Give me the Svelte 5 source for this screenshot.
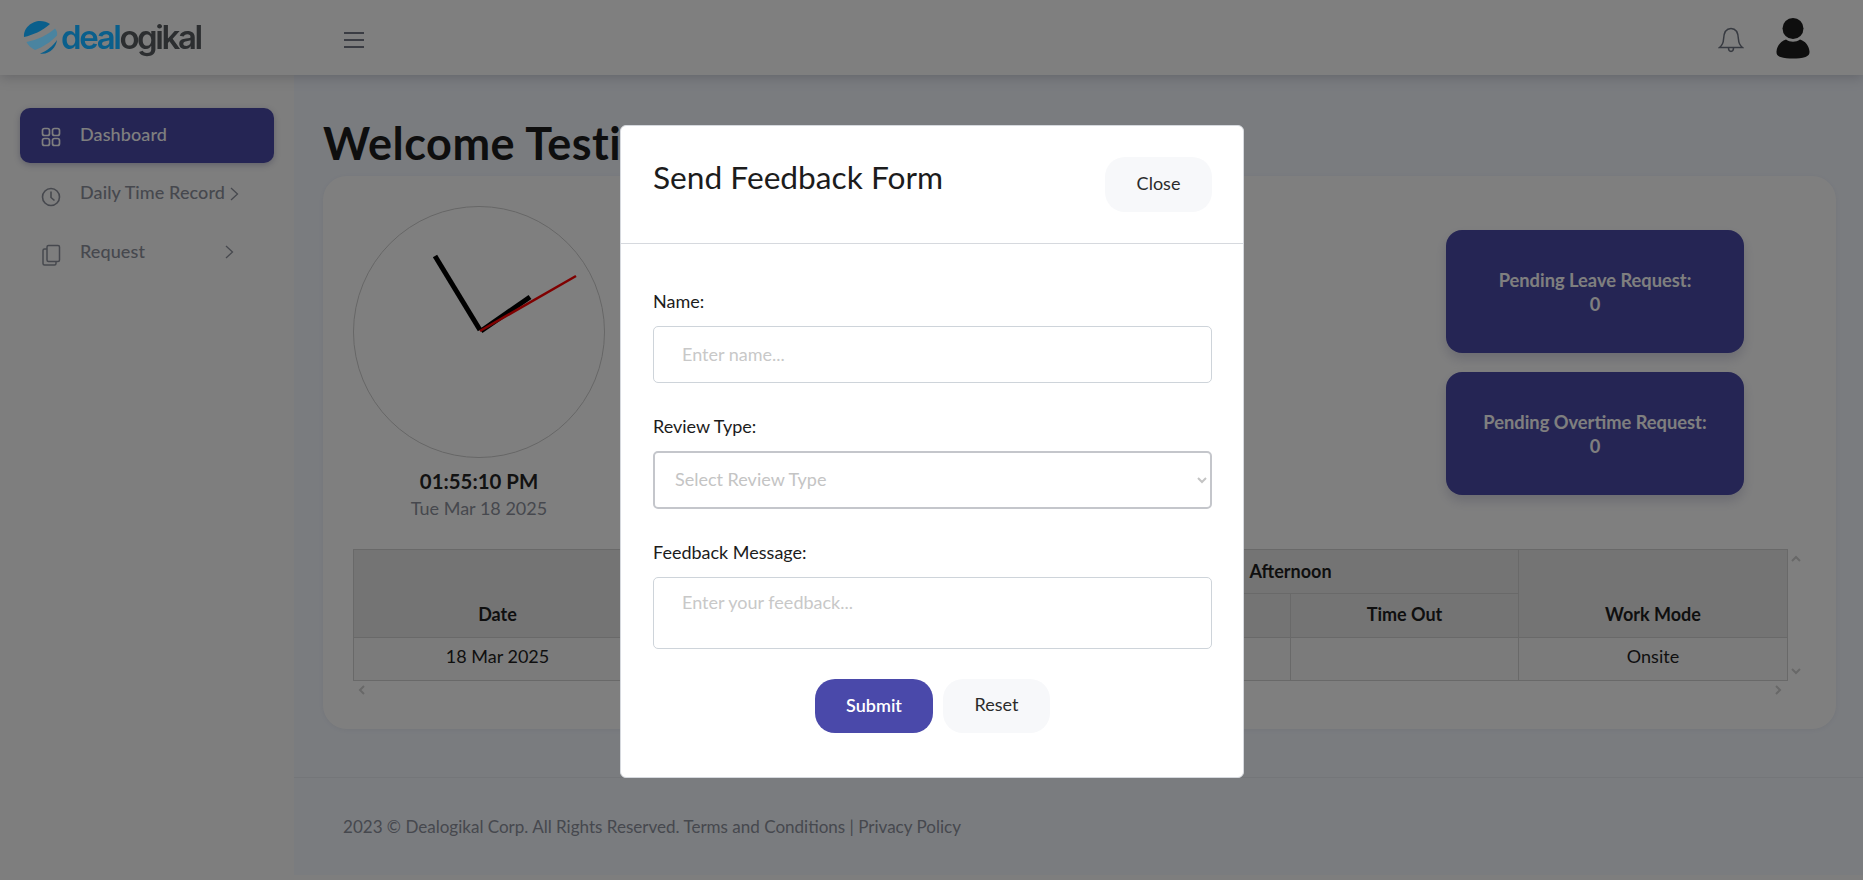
<script>
  const menu = [
    { label: "Dashboard", icon: "grid", active: true },
    { label: "Daily Time Record", icon: "clock", arrow: true, tight: true },
    { label: "Request", icon: "files", arrow: true }
  ];
</script>

<div class="page">
  <header class="topbar">
    <div class="logo">
      <svg width="36" height="36" viewBox="0 0 36 36">
        <path d="M2 17 C1 8 10 1 18 1 C22 1 25 2 28 4 C20 11 11 15 2 17 Z" fill="#0a5f8c"/>
        <path d="M4.500 22 C15 20 26 15 33 8.500 C35 11 35.500 13 35 15.500 C29 22 21 27 13 30 C9 28 6 25 4.500 22 Z" fill="#4a84a0"/>
        <path d="M18 33.500 C25 31 31 26 35 20 C34 28 27 35 18 33.500 Z" fill="#0a5f8c"/>
      </svg>
      <span class="wordmark"><span class="deal">deal</span>ogikal</span>
    </div>
    <button class="burger" aria-label="Menu">
      <svg width="22" height="18" viewBox="0 0 22 18" fill="none" stroke="#747986" stroke-width="2">
        <path d="M1 2h20M1 9h20M1 16h20"/>
      </svg>
    </button>
    <div class="top-right">
      <svg class="bell" width="26" height="28" viewBox="0 0 26 28" fill="none" stroke="#6f7582" stroke-width="1.500">
        <path d="M1.500 21.500h23c-2.500-2-3.800-4-4-8-.2-6-2.500-11-7.500-11s-7.300 5-7.500 11c-.2 4-1.500 6-4 8z"/>
        <path d="M10.500 22c0 4.500 5 4.500 5 0"/>
      </svg>
      <svg class="user" width="34" height="42" viewBox="0 0 34 42" fill="#1c1c1c">
        <circle cx="17" cy="11.500" r="10.500"/>
        <path d="M10 22.500c4 3 10 3 14 0 5 1.500 9 6 9.500 12 .2 3-1 4.500-4 5.500-7 2-18 2-25 0-3-1-4.200-2.500-4-5.500.5-6 4.500-10.500 9.500-12z"/>
      </svg>
    </div>
  </header>

  <div class="layout">
    <aside class="sidebar">
      {#each menu as item}
        <div class="nav-item" class:active={item.active}>
          <span class="nav-icon">
            {#if item.icon === "grid"}
              <svg class="grid" width="20" height="20" viewBox="0 0 20 20" fill="none" stroke="currentColor" stroke-width="1.700">
                <rect x="1.500" y="1.500" width="7" height="7" rx="2"/>
                <rect x="11.500" y="1.500" width="7" height="7" rx="2"/>
                <rect x="1.500" y="11.500" width="7" height="7" rx="2"/>
                <rect x="11.500" y="11.500" width="7" height="7" rx="2"/>
              </svg>
            {:else if item.icon === "clock"}
              <svg class="low" width="20" height="20" viewBox="0 0 20 20" fill="none" stroke="currentColor" stroke-width="1.600">
                <circle cx="10" cy="10" r="8.500"/>
                <path d="M10 4.500v6l3.500 3"/>
              </svg>
            {:else}
              <svg class="low" width="20" height="22" viewBox="0 0 20 22" fill="none" stroke="currentColor" stroke-width="1.500">
                <rect x="6" y="1.500" width="12.500" height="16" rx="1.500"/>
                <path d="M6 5H3.500A1.500 1.500 0 0 0 2 6.500v13A1.500 1.500 0 0 0 3.500 21h10a1.500 1.500 0 0 0 1.500-1.500V18"/>
              </svg>
            {/if}
          </span>
          <span class="nav-label">{item.label}</span>
          {#if item.arrow}
            <svg class="chev" class:tight={item.tight} width="9" height="14" viewBox="0 0 9 14" fill="none" stroke="currentColor" stroke-width="1.300">
              <path d="M1 1l6.500 6L1 13"/>
            </svg>
          {/if}
        </div>
      {/each}
    </aside>

    <main class="main">
      <div class="content">
        <h1 class="welcome">Welcome Testi</h1>
        <section class="card">
          <div class="top-row">
            <div class="clock-col">
              <svg class="clock" width="252" height="252" viewBox="0 0 252 252">
                <circle cx="126" cy="126" r="125.500" fill="none" stroke="#cdcdcd" stroke-width="1"/>
                <line x1="127" y1="124" x2="82" y2="50" stroke="#000" stroke-width="5"/>
                <line x1="128" y1="125" x2="177" y2="91" stroke="#000" stroke-width="5"/>
                <line x1="127" y1="125" x2="223" y2="70" stroke="#f00" stroke-width="2.500"/>
              </svg>
              <div class="time">01:55:10 PM</div>
              <div class="date">Tue Mar 18 2025</div>
            </div>
            <div class="pending">
              <div class="stat">Pending Leave Request:<br />0</div>
              <div class="stat">Pending Overtime Request:<br />0</div>
            </div>
          </div>

          <div class="table-wrap">
            <table>
              <colgroup>
                <col style="width:288px" /><col style="width:210px" /><col style="width:211px" />
                <col style="width:228px" /><col style="width:228px" /><col />
              </colgroup>
              <thead>
                <tr>
                  <th rowspan="2">Date</th>
                  <th colspan="2" class="group">Morning</th>
                  <th colspan="2" class="group">Afternoon</th>
                  <th rowspan="2">Work Mode</th>
                </tr>
                <tr>
                  <th>Time In</th><th>Time Out</th><th>Time In</th><th>Time Out</th>
                </tr>
              </thead>
              <tbody>
                <tr><td>18 Mar 2025</td><td></td><td></td><td></td><td></td><td>Onsite</td></tr>
              </tbody>
            </table>
            <div class="v-arrows">
              <svg width="10" height="7" viewBox="0 0 10 7" fill="none" stroke="#d0d0d0" stroke-width="2"><path d="M1 6l4-4 4 4"/></svg>
              <svg width="10" height="7" viewBox="0 0 10 7" fill="none" stroke="#d0d0d0" stroke-width="2"><path d="M1 1l4 4 4-4"/></svg>
            </div>
            <div class="h-arrows">
              <svg width="7" height="10" viewBox="0 0 7 10" fill="none" stroke="#d0d0d0" stroke-width="2"><path d="M6 1L2 5l4 4"/></svg>
              <svg width="7" height="10" viewBox="0 0 7 10" fill="none" stroke="#d0d0d0" stroke-width="2"><path d="M1 1l4 4-4 4"/></svg>
            </div>
          </div>
        </section>
      </div>
      <footer class="footer">2023 © Dealogikal Corp. All Rights Reserved. Terms and Conditions | Privacy Policy</footer>
    </main>
  </div>
</div>

<div class="backdrop"></div>
<div class="modal-layer">
  <div class="modal">
    <div class="modal-head">
      <h2>Send Feedback Form</h2>
      <button class="btn light">Close</button>
    </div>
    <form class="modal-body">
      <label for="fb-name">Name:</label>
      <input id="fb-name" type="text" placeholder="Enter name..." />
      <label for="fb-type">Review Type:</label>
      <select id="fb-type">
        <option>Select Review Type</option>
      </select>
      <label for="fb-msg">Feedback Message:</label>
      <textarea id="fb-msg" placeholder="Enter your feedback..."></textarea>
      <div class="actions">
        <button type="button" class="btn primary">Submit</button>
        <button type="button" class="btn light">Reset</button>
      </div>
    </form>
  </div>
</div>

<style>
  :global(body) {
    margin: 0;
    font-family: "Lato", "Noto Sans", sans-serif;
    color: #1e1e1e;
  }
  .page {
    width: 1863px;
    height: 880px;
    overflow: hidden;
    display: flex;
    flex-direction: column;
    background: #fcfcfc;
  }
  .topbar {
    height: 75px;
    flex: none;
    background: #fff;
    display: flex;
    align-items: center;
    box-shadow: 0 2px 12px rgba(60, 60, 80, 0.25);
    position: relative;
  }
  /* sits over the backdrop, the logo keeps its colours in the reference */
  .logo {
    width: 343px;
    padding-left: 22px;
    box-sizing: border-box;
    display: flex;
    align-items: center;
    gap: 3px;
    position: relative;
    z-index: 7;
  }
  .wordmark {
    font-family: "Inter", sans-serif;
    font-size: 33px;
    font-weight: 600;
    letter-spacing: -2.400px;
    color: #2c2e30;
    line-height: 1;
    margin-top: -1px;
  }
  .deal {
    color: #0a5f8c;
  }
  .burger {
    border: 0;
    background: none;
    padding: 0;
    line-height: 0;
    margin-top: 5px;
  }
  .top-right {
    margin-left: auto;
    margin-right: 53px;
    display: flex;
    align-items: center;
    gap: 32px;
  }
  .bell {
    margin-top: 4px;
  }
  .user {
    margin-top: 1px;
  }

  .layout {
    flex: 1;
    display: flex;
    min-height: 0;
  }
  .sidebar {
    width: 294px;
    flex: none;
    padding: 33px 20px 0;
    box-sizing: border-box;
    color: #8d919c;
  }
  .nav-item {
    width: 254px;
    height: 55px;
    box-sizing: border-box;
    padding-left: 21px;
    margin-bottom: 3px;
    display: flex;
    align-items: center;
    border-radius: 10px;
    font-size: 18px;
    font-weight: 500;
    letter-spacing: 0.1px;
  }
  .nav-item.active {
    background: #4a4aa8;
    color: #fff;
    box-shadow: 0 2px 6px rgba(60, 60, 120, 0.3);
  }
  .nav-icon {
    width: 39px;
    flex: none;
    line-height: 0;
  }
  .low {
    margin-top: 7px;
  }
  .grid {
    margin-top: 2px;
  }
  .nav-label {
    margin-bottom: 4px;
  }
  .chev {
    margin-left: 23px;
  }
  .chev.tight {
    margin-left: 5px;
    margin-top: 1px;
  }
  .nav-item:last-child .chev {
    margin-left: 80px;
  }
  .nav-item:last-child .nav-label {
    margin-bottom: 1px;
  }

  .main {
    flex: none;
    width: 1569px;
    height: 800px;
    background: #f4f8ff;
    display: flex;
    flex-direction: column;
  }
  .content {
    padding: 38px 27px 0 29px;
    height: 702px;
    box-sizing: border-box;
    flex: none;
  }
  .welcome {
    margin: 0;
    font-size: 45px;
    letter-spacing: 0.5px;
    line-height: 61px;
    height: 63px;
    font-weight: 700;
    color: #1c1c1c;
    white-space: nowrap;
  }
  .card {
    background: #fff;
    border-radius: 24px;
    height: 553px;
    box-sizing: border-box;
    padding: 30px 30px 0;
    box-shadow: 0 1px 4px rgba(100, 100, 120, 0.08);
  }
  .top-row {
    display: flex;
    justify-content: space-between;
    height: 343px;
  }
  .clock-col {
    width: 252px;
    text-align: center;
  }
  .clock {
    display: block;
  }
  .time {
    margin-top: 8px;
    font-size: 20.400px;
    font-weight: 700;
    line-height: 30px;
    color: #242424;
  }
  .date {
    font-size: 18px;
    line-height: 25px;
    color: #8d919c;
  }
  .pending {
    width: 298px;
    margin-right: 62px;
    padding-top: 24px;
    display: flex;
    flex-direction: column;
    gap: 19px;
  }
  .stat {
    height: 123px;
    box-sizing: border-box;
    padding-top: 39px;
    background: #4a4aa8;
    border-radius: 16px;
    color: #fff;
    font-size: 18.300px;
    font-weight: 700;
    line-height: 23.500px;
    text-align: center;
    box-shadow: 0 6px 12px rgba(60, 60, 120, 0.2);
  }
  .table-wrap {
    position: relative;
    width: 1435px;
  }
  table {
    width: 1435px;
    border-collapse: collapse;
    table-layout: fixed;
    font-size: 18px;
  }
  th,
  td {
    border: 1px solid #d2d2d2;
    text-align: center;
    height: 44px;
    padding: 0;
    box-sizing: border-box;
  }
  th {
    background: #e9e9e9;
    font-weight: 700;
    vertical-align: bottom;
    padding-bottom: 12px;
    color: #1e1e1e;
  }
  th.group {
    vertical-align: middle;
    padding-bottom: 2px;
    font-weight: 700;
  }
  td {
    background: #f6f6f6;
    padding-bottom: 6px;
    height: 43px;
  }
  .v-arrows {
    position: absolute;
    top: 6px;
    left: 1438px;
    height: 120px;
    display: flex;
    flex-direction: column;
    justify-content: space-between;
  }
  .h-arrows {
    display: flex;
    justify-content: space-between;
    padding: 4px 6px 0 5px;
    line-height: 0;
  }

  .footer {
    height: 98px;
    box-sizing: border-box;
    border-top: 1px solid #e8ecf2;
    padding: 38px 0 0 49px;
    font-size: 17.050px;
    color: #8d919c;
    white-space: nowrap;
  }

  .backdrop {
    position: fixed;
    inset: 0;
    background: rgba(0, 0, 0, 0.5);
    z-index: 5;
  }
  .modal-layer {
    position: fixed;
    inset: 0;
    z-index: 6;
    display: flex;
    justify-content: center;
    align-items: flex-start;
    padding-top: 125px;
    pointer-events: none;
  }
  .modal {
    width: 624px;
    height: 653px;
    margin-left: 1px;
    box-sizing: border-box;
    background: #fff;
    border: 1px solid #d6d9de;
    border-radius: 6px;
  }
  .modal-head {
    height: 118px;
    box-sizing: border-box;
    border-bottom: 1px solid #d6d9de;
    padding: 31px 31px 0 32px;
    display: flex;
    justify-content: space-between;
    align-items: flex-start;
  }
  h2 {
    margin: -1px 0 0;
    font-size: 31.700px;
    line-height: 42px;
    font-weight: 400;
    color: #1c1c1c;
  }
  .btn {
    height: 55px;
    border: 0;
    border-radius: 20px;
    font-family: inherit;
    font-size: 18px;
    padding: 0 0 4px;
  }
  .btn.light {
    width: 107px;
    background: #f7f8fa;
    color: #2b2b2b;
  }
  .btn.primary {
    width: 118px;
    background: #4a49aa;
    color: #fff;
    font-weight: 600;
    padding-bottom: 2px;
  }
  .modal-body {
    padding: 45px 31px 0 32px;
    display: flex;
    flex-direction: column;
  }
  label {
    font-size: 18px;
    line-height: 25px;
    margin-bottom: 12px;
    color: #1c1c1c;
  }
  input,
  textarea,
  select {
    width: 100%;
    box-sizing: border-box;
    border: 1px solid #ced4da;
    border-radius: 5px;
    font-family: inherit;
    font-size: 18px;
    background: #fff;
    margin: 0;
    outline: 0;
    resize: none;
  }
  input {
    height: 57px;
    padding: 0 28px 2px;
    margin-bottom: 31px;
  }
  select {
    height: 58px;
    padding: 0 16px 2px;
    border: 2px solid #c4c6cb;
    color: #c4c4c4;
    margin-bottom: 31px;
  }
  textarea {
    height: 72px;
    padding: 12px 28px;
    line-height: 25px;
  }
  input::placeholder,
  textarea::placeholder {
    color: #c8c8c8;
    opacity: 1;
  }
  .actions {
    margin-top: 30px;
    display: flex;
    justify-content: center;
    gap: 10px;
  }
  .actions .btn {
    height: 54px;
  }
</style>
